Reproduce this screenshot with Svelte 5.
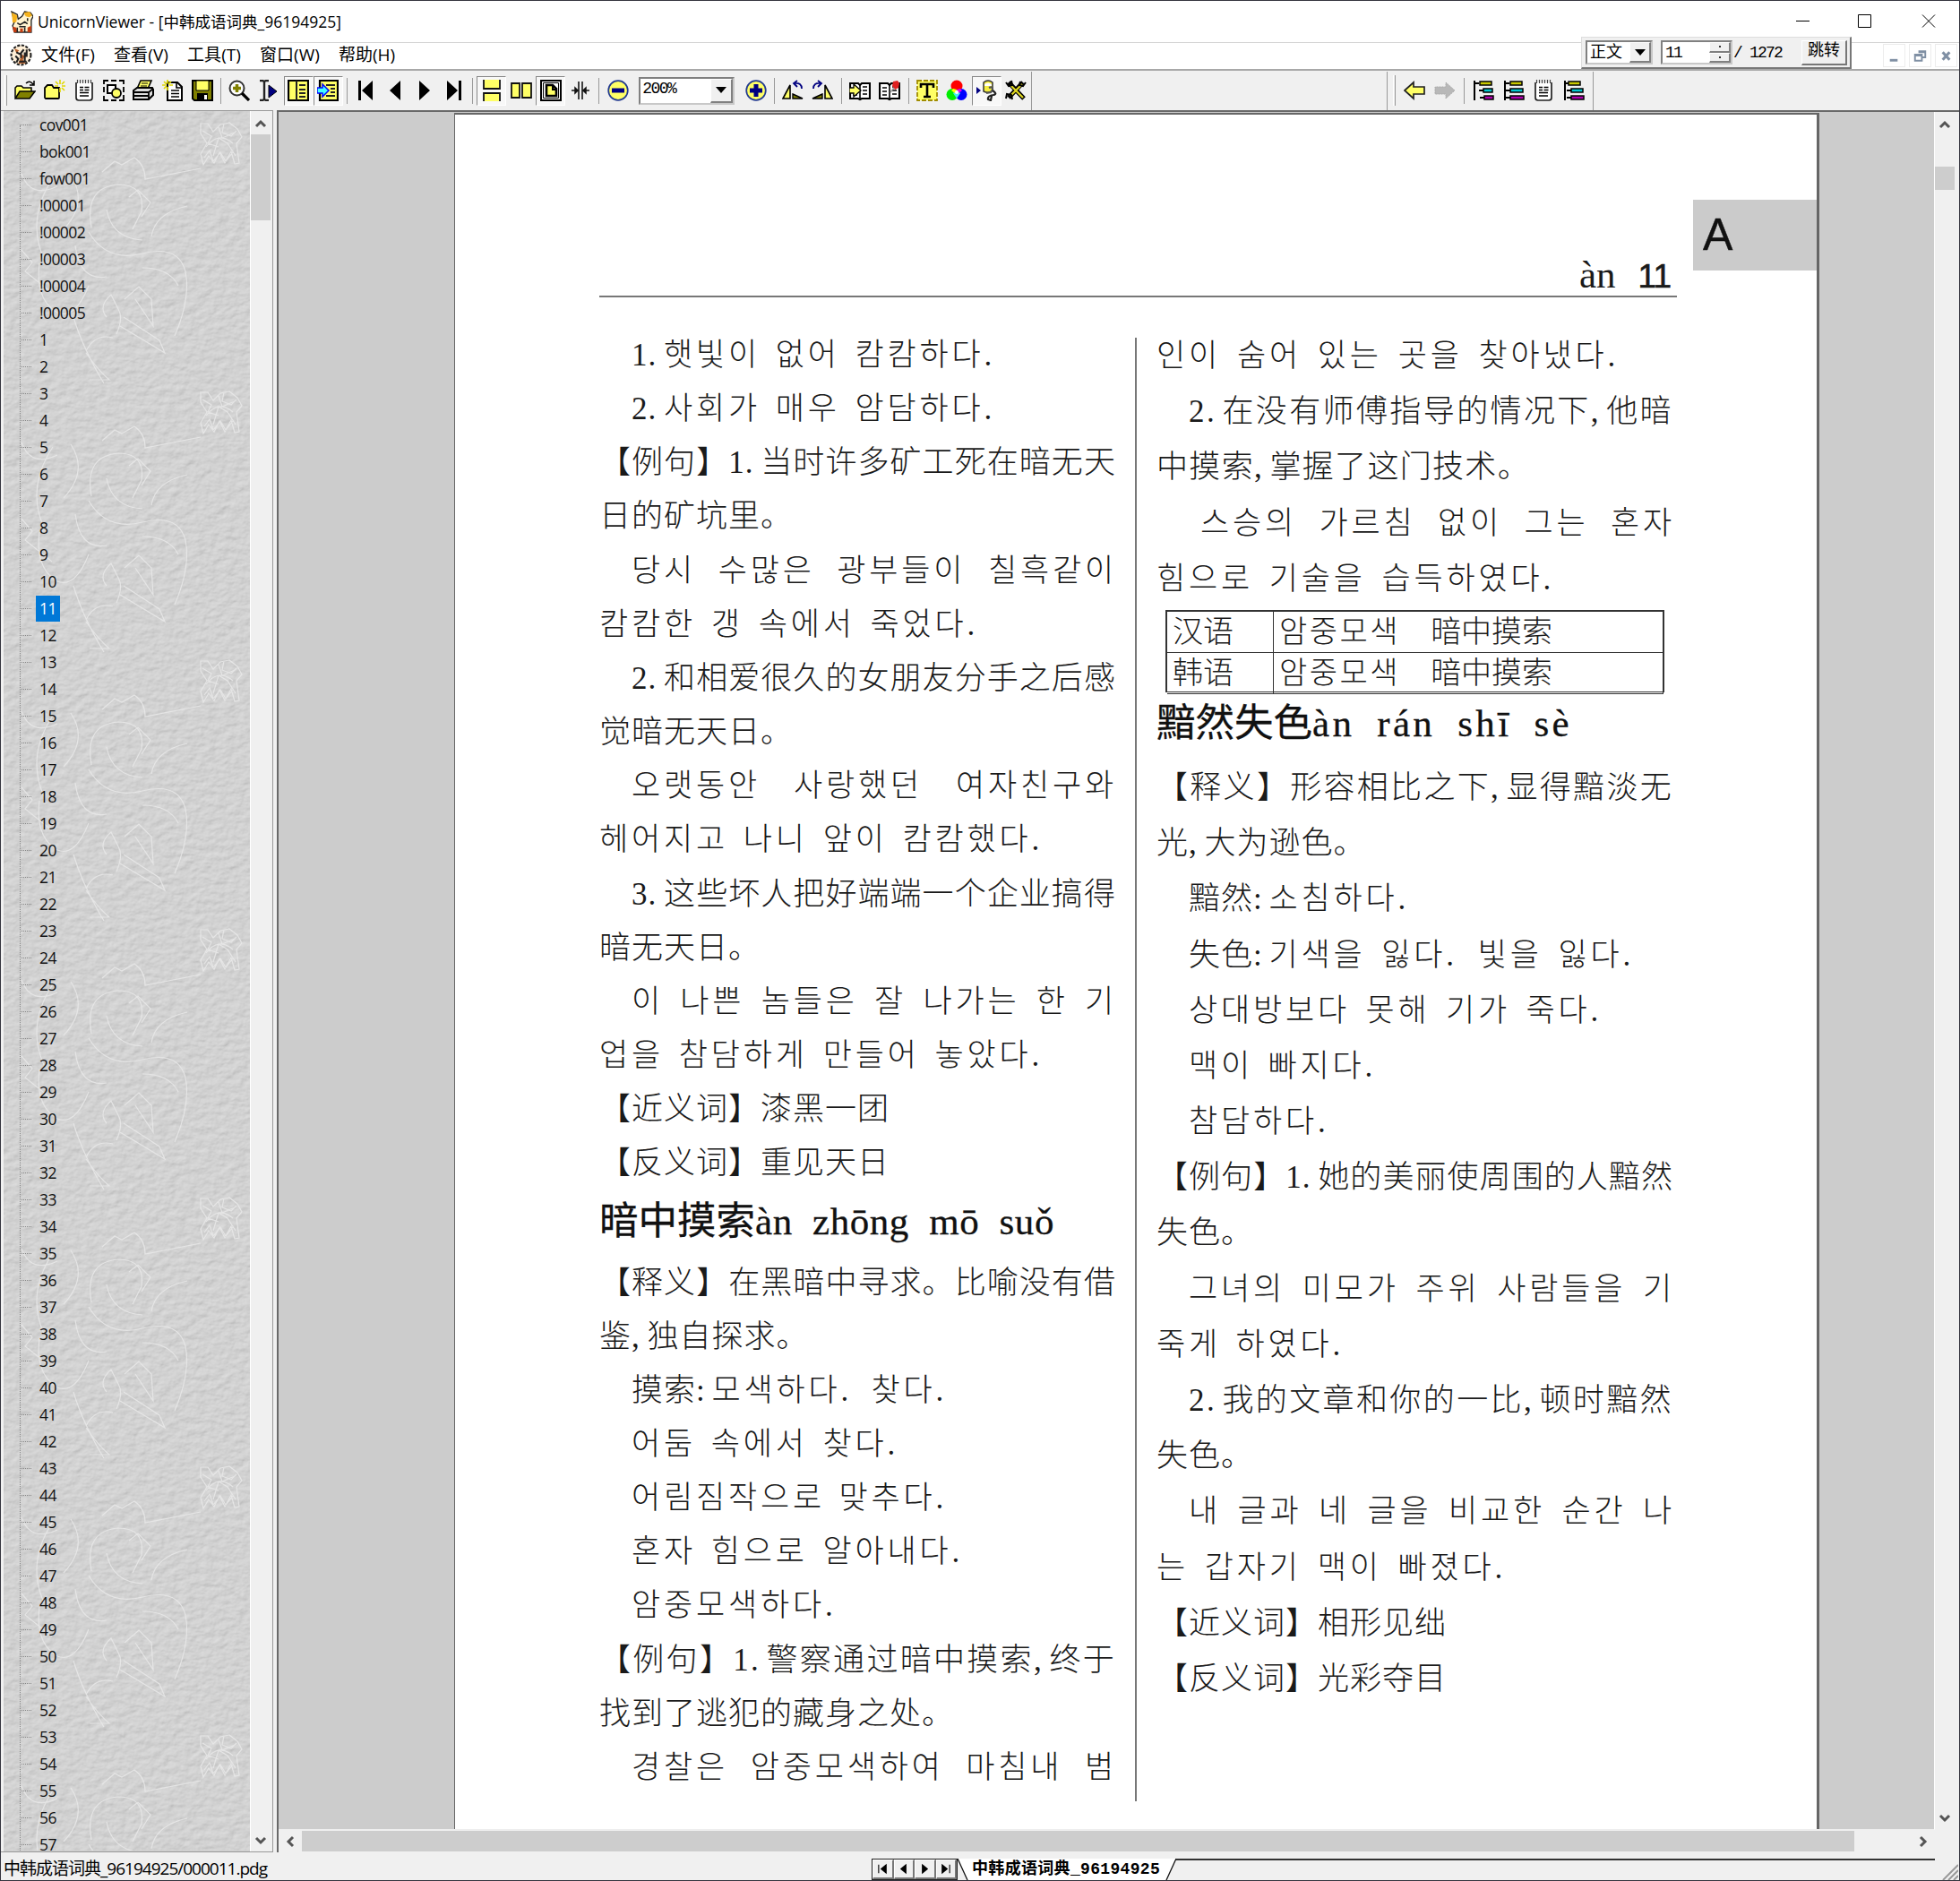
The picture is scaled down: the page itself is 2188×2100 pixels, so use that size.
<script>
  const sidebarItems = [
    'cov001', 'bok001', 'fow001', '!00001', '!00002', '!00003', '!00004', '!00005',
    ...Array.from({ length: 57 }, (_, i) => String(i + 1))
  ];

  const menus = [
    { label: '文件(F)', w: 60 },
    { label: '查看(V)', w: 61 },
    { label: '工具(T)', w: 60 },
    { label: '窗口(W)', w: 67 },
    { label: '帮助(H)', w: 63 }
  ];

  // Each printed line: text, indent in px, set width in px (0 keeps the natural width).
  const leftTop = [
    ['1.햇빛이 없어 캄캄하다.', 36, 411],
    ['2.사회가 매우 암담하다.', 36, 411],
    ['【例句】1.当时许多矿工死在暗无天', 0, 577],
    ['日的矿坑里。', 0, 0],
    ['당시 수많은 광부들이 칠흑같이', 36, 542],
    ['캄캄한 갱 속에서 죽었다.', 0, 428],
    ['2.和相爱很久的女朋友分手之后感', 36, 541],
    ['觉暗无天日。', 0, 0],
    ['오랫동안 사랑했던 여자친구와', 36, 542],
    ['헤어지고 나니 앞이 캄캄했다.', 0, 500],
    ['3.这些坏人把好端端一个企业搞得', 36, 541],
    ['暗无天日。', 0, 0],
    ['이 나쁜 놈들은 잘 나가는 한 기', 36, 542],
    ['업을 참담하게 만들어 놓았다.', 0, 500],
    ['【近义词】漆黑一团', 0, 0],
    ['【反义词】重见天日', 0, 0]
  ];
  const leftBottom = [
    ['【释义】在黑暗中寻求。比喻没有借', 0, 577],
    ['鉴,独自探求。', 0, 0],
    ['摸索:모색하다. 찾다.', 36, 357],
    ['어둠 속에서 찾다.', 36, 303],
    ['어림짐작으로 맞추다.', 36, 357],
    ['혼자 힘으로 알아내다.', 36, 375],
    ['암중모색하다.', 36, 0],
    ['【例句】1.警察通过暗中摸索,终于', 0, 577],
    ['找到了逃犯的藏身之处。', 0, 0],
    ['경찰은 암중모색하여 마침내 범', 36, 542]
  ];
  const rightTop = [
    ['인이 숨어 있는 곳을 찾아냈다.', 0, 521],
    ['2.在没有师傅指导的情况下,他暗', 36, 541],
    ['中摸索,掌握了这门技术。', 0, 417],
    ['스승의 가르침 없이 그는 혼자', 49, 530],
    ['힘으로 기술을 습득하였다.', 0, 449]
  ];
  const rightBottom = [
    ['【释义】形容相比之下,显得黯淡无', 0, 577],
    ['光,大为逊色。', 0, 0],
    ['黯然:소침하다.', 36, 0],
    ['失色:기색을 잃다. 빛을 잃다.', 36, 502],
    ['상대방보다 못해 기가 죽다.', 36, 466],
    ['맥이 빠지다.', 36, 214],
    ['참담하다.', 36, 0],
    ['【例句】1.她的美丽使周围的人黯然', 0, 577],
    ['失色。', 0, 0],
    ['그녀의 미모가 주위 사람들을 기', 36, 543],
    ['죽게 하였다.', 0, 214],
    ['2.我的文章和你的一比,顿时黯然', 36, 541],
    ['失色。', 0, 0],
    ['내 글과 네 글을 비교한 순간 나', 36, 543],
    ['는 갑자기 맥이 빠졌다.', 0, 395],
    ['【近义词】相形见绌', 0, 0],
    ['【反义词】光彩夺目', 0, 0]
  ];

  // Splits a line into Hangul, half-width punctuation and other runs.
  function runs(text) {
    return (text.match(/[\uac00-\ud7a3]+|[.,:]|[^\uac00-\ud7a3.,:]+/g) ?? []).map((t) => ({
      t,
      kind: /[\uac00-\ud7a3]/.test(t) ? 'ko' : /^[.,:]$/.test(t) ? 'half' : 'zh'
    }));
  }

  // Spreads a line to its set width, by word gaps when it has them, else by letter gaps.
  function fit(node, width) {
    if (!width) return;
    const text = node.textContent;
    const rest = width - node.getBoundingClientRect().width;
    const gaps = text.split(' ').length - 1;
    if (gaps && /[\uac00-\ud7a3]/.test(text)) {
      node.style.wordSpacing = `${rest / gaps}px`;
    } else {
      const n = text.replace(/[.,:]/g, node.classList.contains('set') ? '' : '$&').length;
      node.style.setProperty('--fit', `${rest / n}px`);
    }
  }

  const Y = '#ffff66';
  const book = '<path d="M1 4h9l2 2 2-2h9v17h-9l-2 1-2-1H1z" fill="#fff" stroke="#000" stroke-width="2.200"/><path d="M12 6v16M15 8h5M15 12h5M15 16h5M4 17h5" stroke="#000" stroke-width="1.600"/>';
  const tree = (a, b, c) =>
    `<path d="M2 1v22M2 4h5M${b - 5 < 2 ? 2 : b - 5} 12h6M${c - 5 < 2 ? 2 : c - 5} 20h6" stroke="#000" stroke-width="2" fill="none"/><g stroke="#000" stroke-width="1.5"><path d="M${a} 2h13v4H${a}z" fill="#c8c800"/><path d="M${b} 10h${22 - b}v4H${b}z" fill="#00c8d0"/><path d="M${c} 18h${23 - c}v4H${c}z" fill="#b000b0"/></g>`;
  const notepad =
    '<path d="M3 2.500h18V20q0 3-3 3H6q-3 0-3-3z" fill="#fff"/><path d="M3 3v17q0 3 3 3h12q3 0 3-3V3" fill="none" stroke="#222" stroke-width="1.700"/><path d="M4.500 0v4M7.500 0v4M10.500 0v4M13.500 0v4M16.500 0v4M19.500 0v4" stroke="#444" stroke-width="1.200"/><path d="M7 8.500h4M12.500 8.500h5M7 11.500h4M12.500 11.500h5M7 14.500h10M7 18h10" stroke="#000" stroke-width="1.300"/>';

  const icons = {
    open: `<path d="M1 20V9l2-2h5l2 2h9v4" fill="${Y}" stroke="#000" stroke-width="1.5"/><path d="M1 21l5-8h17l-6 8z" fill="#808000" stroke="#000" stroke-width="1.5"/><path d="M13 4q4-4 8 1M22 1v5h-5" fill="none" stroke="#000" stroke-width="1.5"/>`,
    newfolder: `<path d="M1 20V9l3-3h5l2 3h6v11q0 1-1 1H2z" fill="${Y}" stroke="#000" stroke-width="1.8"/><path d="M18 0v5M18 9v5M12 7h4M20 7h4M13 2l3 3M23 2l-3 3M23 12l-3-3" stroke="#e0d800" stroke-width="1.6"/>`,
    page: notepad,
    select: `<path d="M1 5V1h5M9 1h6M18 1h5v4M23 8v6M23 17v6h-5M15 23H9M6 23H1v-5M1 14V8" fill="none" stroke="#000" stroke-width="1.8"/><path d="M5 6h9v9H5z" fill="#fff" stroke="#000" stroke-width="2"/><circle cx="15" cy="15" r="5" fill="${Y}" stroke="#000" stroke-width="1.8"/>`,
    print: `<path d="M5 10l4-9h12l-4 9z" fill="${Y}" stroke="#000" stroke-width="1.6"/><path d="M10 4h7M9 7h7" stroke="#000" stroke-width="1.2"/><path d="M1 12l4-3h17l1 2v6l-5 5H1z" fill="#ddd" stroke="#000" stroke-width="2"/><path d="M1 14h17l5-4M1 18h17M18 14v8" fill="none" stroke="#000" stroke-width="1.8"/>`,
    newpage: '<path d="M6 3h11l5 5v15H6z" fill="#fff" stroke="#000" stroke-width="2"/><path d="M16 3v6h6M10 12h9M10 15.500h9M10 19h9" fill="none" stroke="#000" stroke-width="1.6"/><path d="M6 0v4M6 8v4M0 6h4M8 6h4M2 2l3 3M10 2L7 5M2 10l3-3" stroke="#e0d800" stroke-width="1.7"/>',
    save: `<path d="M1 1h22v22H3l-2-2z" fill="#808000" stroke="#000" stroke-width="2"/><path d="M5 1h14v11H5z" fill="${Y}" stroke="#000"/><path d="M6 15h12v8H6z" fill="#000"/><path d="M14 17h3v5h-3z" fill="#fff"/>`,
    zoom: '<circle cx="9.500" cy="9.500" r="8" fill="#fff" stroke="#333" stroke-width="2"/><path d="M9.500 5v9M5 9.500h9" stroke="#808000" stroke-width="3.500"/><path d="M15 15l8 8" stroke="#000" stroke-width="3.200"/>',
    cursor: '<path d="M2 1h3l2 1 2-1h3M2 23h3l2-1 2 1h3M7 2v20" fill="none" stroke="#222" stroke-width="2.400"/><path d="M12 6v14l9-7z" fill="#000080" stroke="#000"/>',
    panel: `<path d="M1 1h22v22H1z" fill="${Y}" stroke="#000" stroke-width="2.200"/><path d="M10 1v22M13 6h7M13 11h7M13 15h7M13 19h7" stroke="#222" stroke-width="2"/>`,
    panel2: `<path d="M3 1h20v22H3z" fill="${Y}" stroke="#000" stroke-width="2.200"/><path d="M10 6h10M15 10h5M15 14h5M10 18h10" stroke="#222" stroke-width="2"/><path d="M0 9h6V5l7 7-7 7v-4H0z" fill="#4ff" stroke="#00f" stroke-width="1.500"/>`,
    first: '<path d="M4 1h3v22H4zM20 1v22L8 12z"/>',
    prev: '<path d="M18 1v22L6 12z"/>',
    next: '<path d="M6 1v22l12-11z"/>',
    last: '<path d="M17 1h3v22h-3zM4 1v22l12-11z"/>',
    rows: `<path d="M4 0h16v10H4zM4 15h16v9H4z" fill="${Y}"/><path d="M3 0v10h18V0M3 24V15h18v9" fill="none" stroke="#111" stroke-width="1.800"/>`,
    cols: `<path d="M1 4h9v16H1zM13 4h10v16H13z" fill="${Y}" stroke="#111" stroke-width="1.800"/>`,
    fitpage: `<path d="M1 1h22v22H1z" fill="#fff" stroke="#000" stroke-width="2"/><path d="M3.500 3.500h17v17h-17z" fill="none" stroke="#000"/><path d="M7 6h7l4 4v8H7z" fill="${Y}" stroke="#000" stroke-width="2.600"/><path d="M14 6v5h4" fill="none" stroke="#000" stroke-width="2"/>`,
    split: '<path d="M10 2v20M14 2v20" stroke="#222" stroke-width="1.700"/><path d="M2 12h8M14 12h8M6 9l3 3-3 3zM18 9l-3 3 3 3z" stroke="#111" stroke-width="1.500"/>',
    minus: `<circle cx="12" cy="12" r="10.800" fill="${Y}" stroke="#223a90" stroke-width="1.700"/><path d="M5 12h14" stroke="#000080" stroke-width="5"/>`,
    plus: `<circle cx="12" cy="12" r="10.800" fill="${Y}" stroke="#223a90" stroke-width="1.700"/><path d="M5 12h14M12 5v14" stroke="#000080" stroke-width="5"/>`,
    rotl: `<path d="M1 21L9 6v15z" fill="${Y}" stroke="#000" stroke-width="1.600"/><path d="M12 16l11 5H12z" fill="#808000" stroke="#000" stroke-width="1.400"/><path d="M22 10q0-7-8-6M17 1l-4 3 4 4" fill="none" stroke="#000080" stroke-width="1.800"/>`,
    rotr: `<path d="M23 21L15 6v15z" fill="${Y}" stroke="#000" stroke-width="1.600"/><path d="M12 16L1 21h11z" fill="#808000" stroke="#000" stroke-width="1.400"/><path d="M2 10q0-7 8-6M7 1l4 3-4 4" fill="none" stroke="#000080" stroke-width="1.800"/>`,
    book1: `${book}<path d="M0 9h5V5l8 7-8 7v-4H0z" fill="${Y}" stroke="#000" stroke-width="1.300"/>`,
    book2: `${book}<path d="M4 9h5M4 13h5" stroke="#000" stroke-width="1.600"/><path d="M16 2l5-1 2 3-1 5-4 2-3-4z" fill="#e02020"/><path d="M17 9l-4 5" stroke="#999" stroke-width="1.500"/>`,
    text: '<path d="M1 1h22v22H1z" fill="#ffff66" stroke="#a08c00" stroke-width="1.800" stroke-dasharray="5 2"/><path d="M5 9V5h14v4M12 5v14M8 19h8" fill="none" stroke="#000" stroke-width="2.600"/>',
    colors: '<circle cx="12" cy="7" r="6.500" fill="#f00"/><circle cx="7" cy="16.500" r="6.500" fill="#0e0"/><circle cx="17" cy="16.500" r="6.500" fill="#00f"/><path d="M12 11l4 4-4 6-4-6z" fill="#4ee"/><path d="M8 10l4 1-2 4-4-3z" fill="#ff0"/><path d="M16 10l-4 1 2 4 4-3z" fill="#e0e"/><circle cx="12" cy="14" r="2" fill="#fff"/>',
    mouse: '<path d="M1 8l5 4-5 4z" fill="#000080"/><path d="M9 3q5-4 10 0v9q-4 4-10 1z" fill="#f4ee40" stroke="#333" stroke-width="1.500"/><path d="M10 5q4-3 8 0v2h-8z" fill="#fff"/><path d="M15 9q4-2 4 2l-2 3-5 1" stroke="#555" stroke-width="2.200" fill="none"/><path d="M19 12q6 4 1 5-7 1-6 5l3 1 1-5" fill="none" stroke="#222" stroke-width="2.200"/>',
    tools: '<path d="M4 3l17 18M20 3L4 20" stroke="#000" stroke-width="5"/><path d="M6 6l14 14M19 5L6 18" stroke="#e0d820" stroke-width="2.200"/><path d="M1 3l3 4 4-1-1-5M23 3l-3 4-4-1 1-4M1 21l1-5 5 1 1 5" fill="none" stroke="#000" stroke-width="2"/>',
    back: `<path d="M1 12L11 3v5h12v8H11v5z" fill="${Y}" stroke="#222" stroke-width="1.700"/>`,
    fwd: '<path d="M23 12L13 3v5H1v8h12v5z" fill="#b8b8b8" stroke="#aaa" stroke-dasharray="2 1"/>',
    tree1: tree(8, 12, 13),
    tree2: tree(8, 8, 8),
    tree3: tree(6, 9, 9)
  };

  const bar = [
    'open', 'newfolder', 'page', 'select', 'print', 'newpage', 'save', '|',
    'zoom', 'cursor', '*panel', '*panel2', '|',
    'first', 'prev', 'next', 'last', '|',
    '*rows', 'cols', '*fitpage', 'split', '|',
    'minus', 'combo', 'plus', '|',
    'rotl', 'rotr', '|', 'book1', 'book2', '|',
    'text', 'colors', '*mouse', 'tools'
  ];
  const bar2 = ['back', 'fwd', '|', 'tree1', 'tree2', 'page', 'tree3'];
  const tiles = [0, 1, 2, 3, 4, 5, 6];
</script>

{#snippet chevron(dir)}
  <svg class="chev {dir}" viewBox="0 0 14 14"><path d="M2 10l5-5 5 5" /></svg>
{/snippet}

{#snippet strip(list)}
  {#each list as item}
    {#if item === '|'}
      <i class="sep"></i>
    {:else if item === 'combo'}
      <div class="combo zoomcombo"><span use:fit={39}>200%</span><b class="drop"></b></div>
    {:else}
      <div class="cell" class:pressed={item[0] === '*'}>
        <svg viewBox="0 0 24 24">{@html icons[item.replace('*', '')]}</svg>
      </div>
    {/if}
  {/each}
{/snippet}

{#snippet lines(list)}
  {#each list as [text, indent, width]}
    <div class="line" style:padding-left="{indent}px">
      <span class="set" use:fit={width}>{#each runs(text) as r}<span class={r.kind}>{r.t}</span>{/each}</span>
    </div>
  {/each}
{/snippet}

<div class="window">
  <header class="title">
    <svg class="logo" viewBox="0 0 24 24">
      <path d="M1 1l6 3 1 5 4-3 3-5 6 1 3 4-2 4v13H4L2 16l2-4z" fill="#fff3cf" stroke="#222" stroke-width="1.300" />
      <path d="M1 2l6 3-1 7-4 1zM14 2l6-1 3 4-3 2-4-1z" fill="#f5b21c" />
      <path d="M2 17l4 1 1 5H3zM10 19h3v4h-3zM18 18l4-2v7h-4z" fill="#c43c10" />
      <path d="M7 13l3 2 5-3 3 2M9 17h7M7 18v5M15 18v5M18 8v3" stroke="#222" stroke-width="1.500" fill="none" />
    </svg>
    <span use:fit={339}>UnicornViewer - [中韩成语词典_96194925]</span>
    <svg class="winbtns" viewBox="0 0 156 16">
      <path d="M0 7.500h15M69.500 .5h14v14h-14zM141 .5l14 14M155 .5l-14 14" fill="none" stroke="#000" />
    </svg>
  </header>

  <nav class="menu">
    <svg class="logo2" viewBox="0 0 24 24">
      <circle cx="12" cy="12" r="10.500" fill="#fff0d8" stroke="#222" stroke-width="2" stroke-dasharray="3 1.500" />
      <path d="M5 5l5 2-3 3zM12 11l4 2-2 4 3 4H9l2-5z" fill="#b5602c" />
      <path d="M7 9l4 2 4-5M6 13l3 3-2 4M12 10v5M16 9v10M10 19h8M18 6v8" stroke="#222" stroke-width="2" fill="none" />
    </svg>
    {#each menus as m}
      <span class="menuitem"><span use:fit={m.w}>{m.label}</span></span>
    {/each}
    <div class="mdibtns">
      <svg viewBox="0 0 24 24"><path d="M7 16h9v3H7z" fill="#8090a4" /></svg>
      <svg viewBox="0 0 24 24"><path d="M10 7h8v7h-3M6 11h8v7H6zM6 12h8M10 8h8" fill="none" stroke="#8090a4" stroke-width="2" /></svg>
      <svg viewBox="0 0 24 24"><path d="M8 8l8 9M16 8l-8 9" stroke="#8090a4" stroke-width="3.200" /></svg>
    </div>
  </nav>

  <div class="goto">
    <div class="combo kind"><span>正文</span><b class="drop"></b></div>
    <div class="combo spin"><span use:fit={21}>11</span><b class="updown"><i></i><i></i></b></div>
    <span class="total" use:fit={54}>/ 1272</span>
    <span class="jump">跳转</span>
  </div>

  <div class="toolbar">
    <i class="grip"></i>
    {@render strip(bar)}
    <i class="edge"></i>
    <div class="second">
      <i class="edge"></i>
      <i class="grip"></i>
      {@render strip(bar2)}
      <i class="edge"></i>
    </div>
  </div>

  <main>
    <aside>
      <div class="tree">
        <svg class="texture" width="275" height="1942" viewBox="0 0 275 1942">
          <defs>
            <filter id="stone" x="0" y="0" width="100%" height="100%">
              <feTurbulence type="fractalNoise" baseFrequency="0.09 0.13" numOctaves="3" seed="4" />
              <feDiffuseLighting surfaceScale="0.9" diffuseConstant="1.15" lighting-color="#d2d2d2">
                <feDistantLight azimuth="235" elevation="60" />
              </feDiffuseLighting>
            </filter>
          </defs>
          <rect width="275" height="1942" filter="url(#stone)" />
          {#each tiles as t}
            <g transform="translate(0 {t * 300})" fill="none" stroke="#e9e9e9" stroke-width="1.200" opacity=".85">
              <path d="M220 14l8 0 6 9 8-8 10-2 9 7 5 9-6 7 3 22-5 1-4-14-7 13-6-12-6 12-6-8-6 10-3-12 7-12-7-11zM226 40q14-18 30-4M234 50l6-20 10 6 9 14M240 18l4 12 14-6M224 52l6-8 4 12 8-10 6 10 8-10M246 14l-2 10 10 4 6-6M222 22l10 6-4 8 12 4" />
              <path d="M20 70q10 28 40 14M55 75q-30 45-10 90M75 72q20 30-8 60M110 68l14-12 8 4 14-8q12 8 12 24l62-12M98 130q-8-45 30-48 30 0 26 30l-10 20M115 110q6 32 40 34M140 96l10-8 14 14-10 16M165 140q4-26 40-34M95 135q20 34 60 24 40-10 48 20 6 30-12 72M155 175q30 0 40 20M20 155l12 14-8 10 30 24M40 170q-5 40 20 55 20 8 35-30M80 150q5 40 35 35M115 230q-10-12 5-25l8 16q6 10-2 28M135 210l16-14 14 14 2 30-20-30M130 240l50 30-6-14-40-26M78 230q10 34 34 74M92 268q10-20 30-15M92 270q14 20 26 30l-22 0" />
            </g>
          {/each}
        </svg>
        <ul>
          {#each sidebarItems as item}
            <li class:sel={item === '11'}><span>{item}</span></li>
          {/each}
        </ul>
      </div>
      <div class="vbar left">
        {@render chevron('up')}<i class="thumb"></i>{@render chevron('down')}
      </div>
    </aside>

    <section class="mdi">
      <div class="canvas">
        <article class="page">
          <div class="head">
            <div class="running"><span class="pin">àn</span><span class="num">11</span></div>
            <div class="letter">A</div>
          </div>
          <div class="body">
            <div class="col one">
              {@render lines(leftTop)}
              <h2>暗中摸索<span use:fit={334}>àn zhōng mō suǒ</span></h2>
              {@render lines(leftBottom)}
            </div>
            <div class="rule"></div>
            <div class="col two">
              {@render lines(rightTop)}
              <div class="table">
                <div>汉语</div><div><span class="ko">암중모색</span><span class="han">暗中摸索</span></div>
                <div>韩语</div><div><span class="ko">암중모색</span><span class="han">暗中摸索</span></div>
              </div>
              <h2>黯然失色<span use:fit={290}>àn rán shī sè</span></h2>
              {@render lines(rightBottom)}
            </div>
          </div>
        </article>
      </div>
      <div class="vbar right">
        {@render chevron('up')}<i class="thumb"></i>{@render chevron('down')}
      </div>
      <div class="hbar">
        {@render chevron('lt')}<i class="thumb"></i>{@render chevron('rt')}
      </div>
    </section>
  </main>

  <footer>
    <span class="path" use:fit={294}>中韩成语词典_96194925/000011.pdg</span>
    <div class="nav">
      <b><svg viewBox="0 0 14 14"><path d="M2 2v10" /><path d="M11 2v10L5 7z" class="f" /></svg></b>
      <b><svg viewBox="0 0 14 14"><path d="M10 2v10L4 7z" class="f" /></svg></b>
      <b><svg viewBox="0 0 14 14"><path d="M4 2v10l6-5z" class="f" /></svg></b>
      <b><svg viewBox="0 0 14 14"><path d="M12 2v10" /><path d="M3 2v10l6-5z" class="f" /></svg></b>
    </div>
    <div class="tab">
      <svg viewBox="0 0 244 24"><path d="M0 0l11 24h222l11-24z" fill="#fff" /><path d="M0 0l11 24M233 24l11-24" stroke="#111" stroke-width="1.300" fill="none" /></svg>
      <span use:fit={210}>中韩成语词典_96194925</span>
    </div>
    <div class="tabline"></div>
    <svg class="gripper" viewBox="0 0 18 18"><path d="M1 18L18 1M7 18L18 7M13 18l5-5" stroke="#999" stroke-width="2" /></svg>
  </footer>
</div>

<style>
  :global(body) { margin: 0; background: #fff; }
  * { box-sizing: border-box; }
  .window {
    --fit: 0px;
    position: relative;
    width: 2188px; height: 2100px;
    display: flex; flex-direction: column;
    border: 1px solid #35353f;
    background: #f0f0f0; color: #000;
    font-family: "Open Sans", "Noto Sans CJK SC", sans-serif;
    overflow: hidden;
  }
  span { white-space: pre; }
  .title {
    height: 47px; flex: none; background: #fff; border-bottom: 1px solid #d4d4d4;
    display: flex; align-items: center; padding: 0 26px 0 11px; font-size: 17.5px;
  }
  .title span { letter-spacing: var(--fit); padding-bottom: 2px; }
  .logo { width: 25px; height: 25px; margin-right: 5px; }
  .winbtns { width: 156px; height: 16px; margin-left: auto; }
  .menu {
    height: 31px; flex: none; background: #fff; border-bottom: 2px solid #a8a8a8;
    display: flex; align-items: center; padding: 0 2px 2px 10px; font-size: 19px;
  }
  .menuitem { margin-right: 21px; padding-bottom: 3px; }
  .menuitem span { letter-spacing: var(--fit); }
  .logo2 { width: 25px; height: 25px; margin-right: 10px; }
  .mdibtns { margin-left: auto; display: flex; gap: 4px; }
  .mdibtns svg { width: 25px; height: 26px; border: 1px solid #ececec; background: #fff; }

  .goto {
    position: absolute; left: 1764px; top: 40px; width: 302px; height: 36px;
    display: flex; align-items: center; padding-left: 4px;
    background: #f0f0f0; border: 1px solid #ddd; border-right: 2px solid #777; border-bottom: 2px solid #777;
    font-family: "Liberation Mono", "Noto Sans CJK SC", monospace; font-size: 18px;
  }
  .combo {
    display: flex; align-items: center; background: #fff; height: 27px;
    border: 2px solid #808080; border-right-color: #c8c8c8; border-bottom-color: #c8c8c8;
  }
  .combo span { padding-left: 3px; letter-spacing: var(--fit); line-height: 22px; }
  .kind { width: 75px; }
  .drop {
    width: 24px; height: 23px; background: #f0f0f0; display: grid; place-items: center; margin-left: auto; flex: none;
    border: 1px solid #fff; border-right: 2px solid #808080; border-bottom: 2px solid #808080;
  }
  .drop::after { content: ''; border: 6px solid transparent; border-top: 7px solid #000; border-bottom: 0; }
  .spin { width: 80px; margin-left: 9px; }
  .updown { margin-left: auto; width: 24px; height: 23px; display: flex; flex-direction: column; }
  .updown i {
    flex: 1; background: #f0f0f0; border: 1px solid #fff; border-right: 2px solid #808080; border-bottom: 2px solid #808080;
    display: grid; place-items: center;
  }
  .updown i::after { content: ''; width: 2px; height: 2px; background: #333; }
  .total { margin-left: 1px; letter-spacing: var(--fit); }
  .jump {
    margin-left: auto; width: 51px; height: 28px; line-height: 23px; text-align: center; margin-right: 3px;
    border: 1px solid #fff; border-right: 2px solid #777; border-bottom: 2px solid #777;
  }

  .toolbar { height: 44px; flex: none; display: flex; align-items: center; padding: 0 0 0 4px; }
  .grip { width: 3px; height: 34px; border-right: 1px solid #999; border-left: 1px solid #fff; margin-right: 3px; }
  .cell { width: 33px; height: 33px; flex: none; display: grid; place-items: center; }
  .cell svg { width: 24px; height: 24px; }
  .pressed {
    background: #f8f8f8; border: 1px solid #888; border-right-color: #fff; border-bottom-color: #fff;
  }
  .sep { width: 1px; height: 29px; background: #999; margin: 0 4px 0 3.8px; flex: none; }
  .edge { width: 1px; height: 43px; background: #999; flex: none; }
  .zoomcombo { width: 107px; height: 31px; margin: 0 7px; font: 18px "Liberation Mono", monospace; flex: none; }
  .zoomcombo span { padding-left: 2px; padding-bottom: 4px; }
  .zoomcombo .drop { width: 25px; height: 27px; }
  .second { display: flex; align-items: center; margin-left: 396px; }
  .second .grip { margin-left: 6px; margin-right: 5px; }
  .second .cell { width: 33.8px; }
  .second > .edge:last-child { margin-left: 4px; }

  main { flex: 1; min-height: 0; display: flex; }
  aside {
    width: 304px; display: flex; padding-left: 3px; margin-right: 4px;
    border-right: 1px solid #999; border-bottom: 1px solid #999; border-top: 1px solid #999; flex: none;
  }
  .tree { position: relative; width: 275px; overflow: hidden; background: #cfcfcf; }
  .texture { position: absolute; left: 0; top: 0; }
  ul {
    position: relative; list-style: none; margin: 0; padding: 0 0 0 18px; height: 1942px;
    font-size: 17.5px; letter-spacing: -0.6px;
  }
  ul::before { content: ''; position: absolute; left: 18px; top: 16px; bottom: 0; border-left: 1px dotted #888; }
  li { height: 30px; display: flex; align-items: center; color: #111; }
  li::before { content: ''; width: 13px; border-top: 1px dotted #888; margin-right: 5px; }
  li span { padding: 0 4px; height: 29px; line-height: 29px; }
  li:last-child span { height: 12px; line-height: 12px; }
  .sel span { background: #0078d7; color: #fff; }

  .chev { width: 14px; height: 14px; flex: none; }
  .chev path { fill: none; stroke: #555; stroke-width: 3; }
  .down { transform: rotate(180deg); }
  .lt { transform: rotate(-90deg); }
  .rt { transform: rotate(90deg); }
  .thumb { background: #cdcdcd; }
  .vbar { display: flex; flex-direction: column; align-items: center; background: #f0f0f0; padding: 7px 0 5px; }
  .vbar .down { margin-top: auto; }
  .left { width: 25px; border-left: 1px solid #fff; padding-right: 2px; }
  .left .thumb { width: 22px; height: 96px; margin-top: 5px; }

  .mdi {
    flex: 1; min-width: 0; display: grid; grid-template: 1fr 25px / 1fr 27px;
    border-left: 2px solid #696969; border-top: 2px solid #696969;
  }
  .canvas { background: #ccc; overflow: hidden; border-bottom: 1px solid #eee; border-right: 1px solid #fff; }
  .right { padding-right: 5px; }
  .right .thumb { width: 22px; height: 26px; margin-top: 40px; }
  .right .down { margin-bottom: 1px; }
  .hbar { display: flex; align-items: center; padding: 0 6px 0 6px; background: #f0f0f0; }
  .hbar .thumb { width: 1733px; height: 23px; margin-left: 6px; }
  .hbar .rt { margin-left: auto; }

  .page {
    margin: 1px 0 0 196px; width: 1524px; height: 1930px; background: #fff;
    border: 1px solid #666; border-right-width: 3px; border-top-width: 2px;
    color: #1a1a1a; font-family: "Liberation Serif", "Noto Sans CJK SC", serif;
  }
  .head { display: flex; padding: 95px 0 0 161px; height: 204px; }
  .running {
    width: 1203px; height: 109px; border-bottom: 2px solid #777;
    display: flex; justify-content: flex-end; align-items: baseline; padding: 65px 7px 0 0; line-height: 38px;
  }
  .pin { font-size: 43px; margin-right: 25px; }
  .num { font: 37px/38px "Liberation Sans", sans-serif; -webkit-text-stroke: .6px #1a1a1a; letter-spacing: -1px; }
  .letter { margin-left: 18px; width: 138px; height: 79px; background: #cbcbcb; font: 50px/79px "Liberation Sans", sans-serif; padding-left: 11px; -webkit-text-stroke: .4px #111; color: #111; }
  .body { display: flex; padding: 35px 0 0 161px; font-size: 35px; font-weight: 300; }
  .col { flex: none; }
  .one { width: 598px; --lh: 60.17px; }
  .two { margin-left: 22px; width: 580px; --lh: 62.2px; }
  .rule { width: 2px; height: 1634px; margin-top: 10px; background: #777; }
  .line { height: var(--lh); line-height: var(--lh); white-space: nowrap; }
  .set { display: inline-block; }
  .zh { letter-spacing: calc(1px + var(--fit)); }
  .ko { letter-spacing: calc(3.8px + var(--fit)); }
  .half { display: inline-block; width: 17.5px; }
  h2 { margin: 0; height: 73px; line-height: 67px; font-size: 43.500px; font-weight: 400; white-space: nowrap; color: #111; -webkit-text-stroke: .3px #111; }
  h2 span { display: inline-block; font-size: 43px; word-spacing: 11px; letter-spacing: var(--fit); }
  .two h2 { height: 76px; line-height: 69px; }
  .table {
    margin: 3px 0 0 10px; width: 557px; height: 92px; display: grid; grid-template: 1fr 1fr / 119px 1fr;
    border: 1px solid #333; border-width: 2px 1px 1px 2px; line-height: 45px; font-size: 34px;
  }
  .table div { border-right: 1px solid #333; border-bottom: 1px solid #333; padding-left: 6px; }
  .table .ko { letter-spacing: 2.5px; }
  .table .han { margin-left: 34px; }

  footer { height: 31px; flex: none; display: flex; position: relative; background: #f0f0f0; }
  .path { font-size: 19px; line-height: 36px; letter-spacing: var(--fit); margin-left: 3px; margin-right: 675px; flex: none; }
  .nav { display: flex; height: 24px; margin-top: 7px; border: 1px solid #222; width: 96px; flex: none; background: #333; }
  .nav b { flex: 1; background: #f0f0f0; border: 1px solid #fff; border-right: 2px solid #777; border-bottom: 2px solid #777; display: grid; place-items: center; }
  .nav svg { width: 13px; height: 13px; }
  .nav path { stroke: #000; stroke-width: 1.200; }
  .nav .f { fill: #000; }
  .tab { position: relative; width: 244px; height: 24px; margin-top: 7px; flex: none; }
  .tab svg { position: absolute; inset: 0; width: 244px; height: 24px; }
  .tab span {
    position: relative; margin-left: 16px; font: bold 18px/25px "Liberation Mono", "Noto Sans CJK SC", monospace;
    letter-spacing: var(--fit); display: inline-block;
  }
  .tabline { flex: 1; border-top: 2px solid #333; margin-top: 7px; }
  .gripper { width: 18px; height: 18px; margin: 13px 1px 0 8px; }
</style>
